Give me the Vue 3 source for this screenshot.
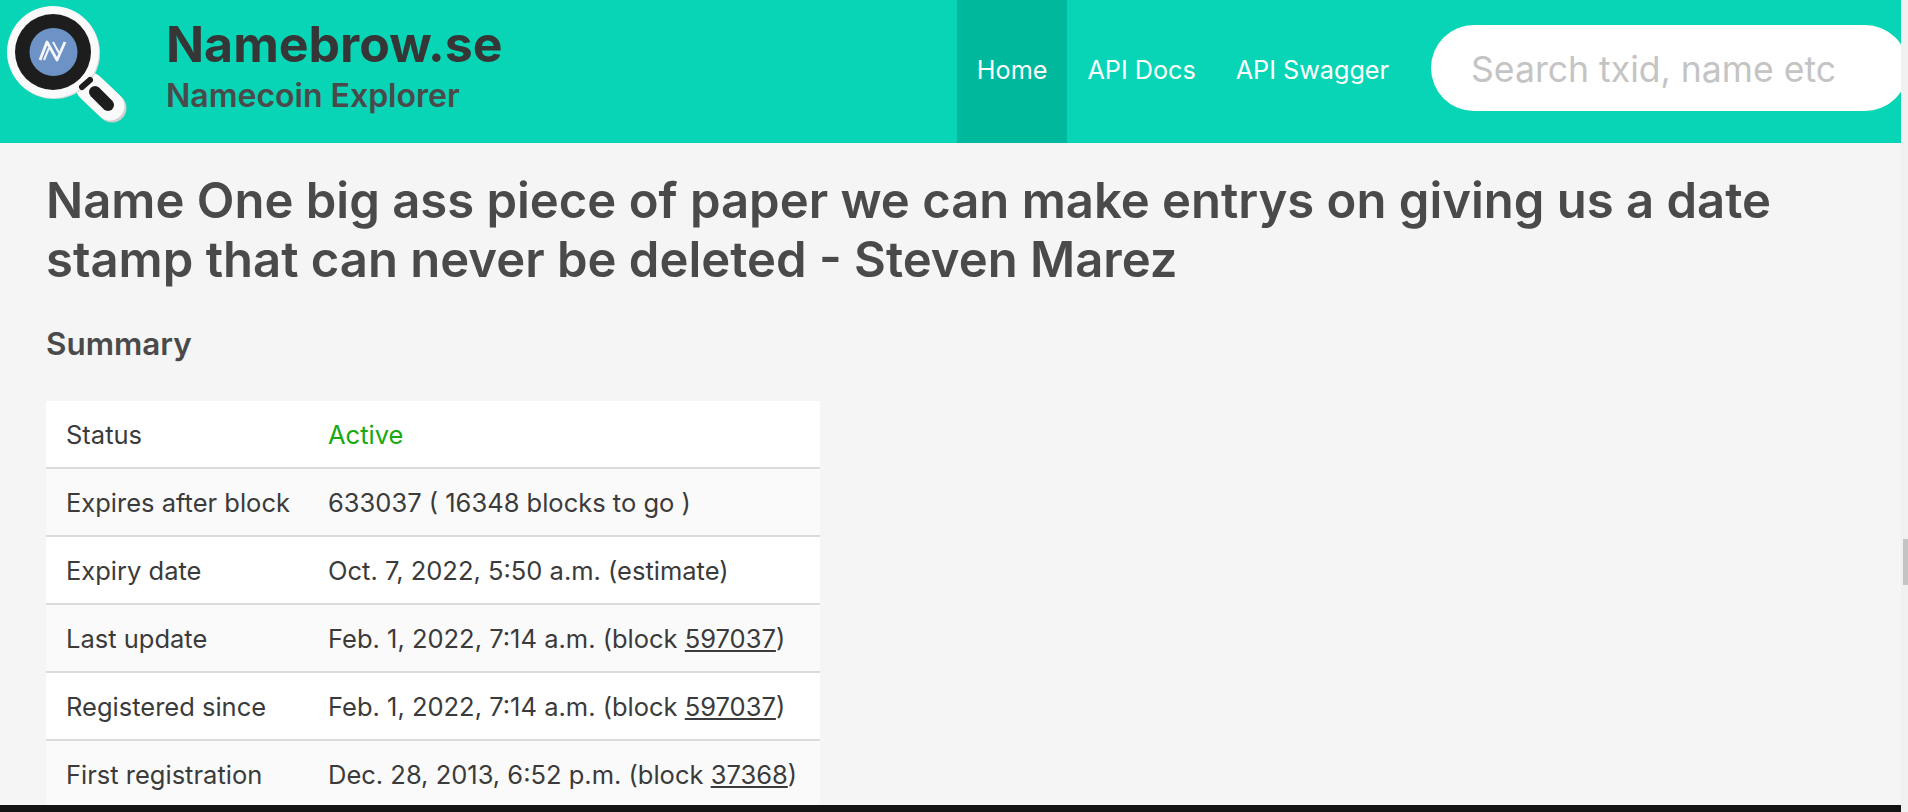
<template>
  <div class="page">
    <div class="column">
      <nav class="navbar">
        <div class="logo">
          <svg viewBox="0 0 140 143" width="140" height="143">
            <path d="M90 87 L110 106" stroke="#cfcfcf" stroke-width="29" stroke-linecap="round" transform="translate(2 2)" />
            <path d="M90 87 L110 106" stroke="#fafafa" stroke-width="29" stroke-linecap="round" />
            <circle cx="54" cy="53" r="46" fill="#d9d9d9" />
            <circle cx="53" cy="52" r="46" fill="#fafafa" />
            <circle cx="53" cy="52" r="38" fill="#1d1d1d" />
            <circle cx="53.5" cy="52" r="24" fill="#6d93c6" />
            <path d="M40 60 L47 42 L57 60 L65 42" fill="none" stroke="#f4f6fa" stroke-width="2.8" stroke-linejoin="round" />
            <path d="M44 60 L49 48 M53 42 L59 53" fill="none" stroke="#f4f6fa" stroke-width="2" />
            <path d="M82 87 L90 80" stroke="#1d1d1d" stroke-width="6" stroke-linecap="round" />
            <path d="M95 92 L108 105" stroke="#1d1d1d" stroke-width="12" stroke-linecap="round" />
          </svg>
        </div>
        <div class="brand">
          <h1>Namebrow.se</h1>
          <h2>Namecoin Explorer</h2>
        </div>
        <div class="links">
          <a
            v-for="link in links"
            :key="link"
            class="nav-link"
            :class="{ active: link === 'Home' }"
            href="#"
          >{{ link }}</a>
        </div>
        <input class="search" type="text" placeholder="Search txid, name etc" />
      </nav>

      <main class="content">
        <h1 class="title">Name One big ass piece of paper we can make entrys on giving us a date stamp that can never be deleted - Steven Marez</h1>
        <h3 class="subtitle">Summary</h3>
        <table class="summary">
          <tbody>
            <tr v-for="row in rows" :key="row.label">
              <td class="label">{{ row.label }}</td>
              <td :class="{ ok: row.ok }">
                {{ row.value }}<template v-if="row.block"><a href="#">{{ row.block }}</a>)</template>
              </td>
            </tr>
          </tbody>
        </table>
      </main>

      <div class="bottom-bar"></div>
    </div>

    <div class="scrollbar"><div class="thumb"></div></div>
  </div>
</template>

<script setup>
const links = ['Home', 'API Docs', 'API Swagger'];

const rows = [
  { label: 'Status', value: 'Active', ok: true },
  { label: 'Expires after block', value: '633037 ( 16348 blocks to go )' },
  { label: 'Expiry date', value: 'Oct. 7, 2022, 5:50 a.m. (estimate)' },
  { label: 'Last update', value: 'Feb. 1, 2022, 7:14 a.m. (block ', block: '597037' },
  { label: 'Registered since', value: 'Feb. 1, 2022, 7:14 a.m. (block ', block: '597037' },
  { label: 'First registration', value: 'Dec. 28, 2013, 6:52 p.m. (block ', block: '37368' },
];
</script>

<style>
html,
body {
  margin: 0;
  overflow: hidden;
}
</style>

<style scoped>
.page {
  height: 812px;
  display: flex;
  overflow: hidden;
  font-family: Inter, "Liberation Sans", sans-serif;
  background: #f5f5f5;
}

.column {
  flex: 1;
  min-width: 0;
  display: flex;
  flex-direction: column;
}

.navbar {
  height: 143px;
  flex-shrink: 0;
  display: flex;
  align-items: stretch;
  background: #07d5b5;
  overflow: hidden;
}

.logo {
  width: 166px;
  flex-shrink: 0;
}

.brand {
  flex: 1;
  min-width: 0;
  padding-top: 15px;
}

.brand h1 {
  margin: 0;
  font-size: 50px;
  line-height: 58px;
  font-weight: 700;
  color: #363636;
}

.brand h2 {
  margin: 5px 0 0;
  font-size: 32px;
  line-height: 36px;
  font-weight: 600;
  color: #4a4a4a;
}

.links {
  display: flex;
}

.nav-link {
  display: flex;
  align-items: center;
  padding: 0 20px 3px;
  font-size: 25.2px;
  color: #fff;
  text-decoration: none;
}

.nav-link.active {
  background: #00b89c;
}

.search {
  width: 477px;
  height: 86px;
  margin: 25px -7px 0 22px;
  padding: 2px 40px 0;
  box-sizing: border-box;
  flex-shrink: 0;
  border: 0;
  border-radius: 43px;
  background: #fff;
  font-family: inherit;
  font-size: 35.6px;
}

.search::placeholder {
  color: #c4c4c4;
}

.content {
  flex: 1;
  min-height: 0;
  overflow: hidden;
  margin-left: 7px;
  padding: 28px 39px 0;
  background: #f5f5f5;
  color: #4a4a4a;
}

.title {
  margin: 0;
  font-size: 49px;
  line-height: 59px;
  font-weight: 600;
}

.subtitle {
  margin: 35px 0 0;
  font-size: 31.4px;
  line-height: 40px;
  font-weight: 600;
}

.summary {
  width: 774px;
  margin-top: 37px;
  border-collapse: collapse;
  background: #fff;
  font-size: 25.5px;
  color: #3b3b3b;
}

.summary td {
  height: 66px;
  padding: 0 0 0 20px;
  border-bottom: 2px solid #dbdbdb;
}

.summary tr:nth-child(even) {
  background: #fafafa;
}

.summary .label {
  width: 262px;
  box-sizing: border-box;
}

.summary .ok {
  color: #18a810;
}

.summary a {
  color: #3b3b3b;
  text-decoration: underline;
}

.bottom-bar {
  height: 7px;
  flex-shrink: 0;
  background: #141414;
}

.scrollbar {
  width: 7px;
  flex-shrink: 0;
  background: #f0f0f0;
  padding: 539px 0 0 2px;
  box-sizing: border-box;
}

.thumb {
  width: 5px;
  height: 46px;
  background: #c4c4c4;
}
</style>
